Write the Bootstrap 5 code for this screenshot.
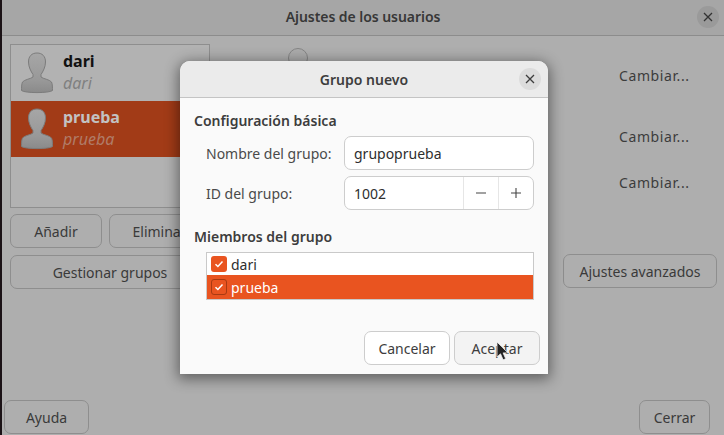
<!DOCTYPE html>
<html lang="es">
<head>
  <meta charset="UTF-8">
  <meta name="viewport" content="width=device-width, initial-scale=1.0">
  <title>Ajustes de los usuarios</title>
  <link rel="stylesheet" href="https://cdn.jsdelivr.net/npm/bootstrap@5.3.0/dist/css/bootstrap.min.css">
  <style>
    body { background: linear-gradient(to right, #1b1216 92%, #6a1f4e); width: 724px; height: 435px; overflow: hidden; position: relative; font-family: "Noto Sans", sans-serif; font-size: 14px; color: #3d3d3d; }
    .main-win { position: absolute; left: 2px; top: 0; width: 722px; height: 435px; background: #aeaeae; border-radius: 9px 9px 0 0; color: #373737; }
    .win-head { height: 36px; background: #a6a6a6; border-bottom: 1px solid #8c8c8c; font-weight: 600; letter-spacing: -.05px; padding-bottom: 2px; }
    .round-x { width: 22px; height: 22px; border-radius: 50%; border: 0; padding: 0; }
    .main-win .round-x { background: #9a9a9a; position: absolute; right: 5px; top: 6px; }
    .win-body { height: 399px; padding: 8px 7px 1px 2px; }
    .left-col { width: 200px; margin-left: 6px; }
    .user-box { height: 164px; border: 1px solid #8e8e8e; background: #b2b2b2; }
    .user-row { height: 56px; padding-left: 9px; gap: 5px; }
    .user-row.on { height: 56px; background: #a23b17; color: #c4c4c4; }
    .user-name { font-size: 16px; font-weight: 700; line-height: 20px; color: #111; }
    .user-row.on .user-name { color: #c2c2c2; }
    .user-sub { font-size: 16px; font-style: italic; line-height: 24px; color: #808080; }
    .user-row.on .user-sub { color: #b07c68; }
    .gtk-btn { height: 34px; padding: 0; font-size: 14px; color: #3a3a3a; background: transparent; border: 1px solid #8e8e8e; border-radius: 7px; }
    .btn-pair { margin-top: 6px; }
    .add-btn { width: 92px; }
    .del-btn { width: 101px; margin-left: 7px; white-space: nowrap; }
    .groups-btn { width: 200px; margin-top: 7px; }
    .right-col { width: 154px; }
    .change-link { padding-left: 56px; color: #3c3c3c; letter-spacing: .6px; line-height: 20px; }
    .change-one { margin-top: 22px; }
    .change-two { margin-top: 41px; }
    .change-three { margin-top: 26px; }
    .adv-btn { margin-top: 61px; }
    .radio-dot { width: 20px; height: 20px; border-radius: 50%; border: 1px solid #858585; background: #ababab; margin-left: 78px; margin-top: 4px; }
    .win-foot { position: absolute; left: 2px; right: 14px; bottom: 1px; }
    .foot-btn { width: 85px; }
    .close-btn { width: 71px; }
    .dlg { position: absolute; left: 180px; top: 61px; width: 368px; height: 313px; background: #fafafa; border-radius: 10px 10px 0 0; box-shadow: 0 3px 14px 2px rgba(0,0,0,.45); z-index: 5; }
    .dlg-head { height: 37px; background: #ebebeb; border-bottom: 1px solid #c4c4c4; border-radius: 10px 10px 0 0; font-weight: 600; color: #3d3d3d; }
    .dlg .round-x { background: #dcdcdc; position: absolute; right: 7px; top: 7px; }
    .dlg-body { padding: 14px 14px 0; }
    .sect-title { font-weight: 600; line-height: 18px; color: #3d3d3d; }
    .basic-title { margin-bottom: 6px; }
    .field-row { margin-left: 12px; height: 34px; }
    .field-first { margin-bottom: 6px; }
    .field-label { width: 138px; color: #4a4a4a; }
    .gtk-input { width: 190px; height: 34px; padding: 0 9px; font-size: 14px; color: #2e2e2e; background: #fff; border: 1px solid #cdcdcd; border-radius: 7px; }
    .gtk-input:focus { box-shadow: none; border-color: #cdcdcd; }
    .spin-box { width: 190px; height: 34px; background: #fff; border: 1px solid #cdcdcd; border-radius: 7px; overflow: hidden; }
    .spin-val { flex: 1; padding-left: 9px; color: #2e2e2e; }
    .spin-step { width: 35px; height: 100%; border-left: 1px solid #e6e6e6; }
    .members-title { margin-top: 18px; margin-bottom: 6px; }
    .member-box { margin-left: 12px; width: 328px; height: 48px; border: 1px solid #c9c9c9; background: #fff; }
    .member-row { height: 22px; padding-left: 4px; gap: 4px; color: #2e2e2e; }
    .member-row.on { height: 24px; background: #e95420; color: #fff; }
    .check-box { width: 16px; height: 16px; border-radius: 3px; background: #e95420; }
    .member-row.on .check-box { border: 1px solid #a83a12; }
    .dlg-foot { position: absolute; right: 8px; bottom: 9px; gap: 4px; }
    .dlg-btn { width: 86px; height: 34px; background: #fff; border: 1px solid #cdcdcd; border-radius: 7px; color: #3d3d3d; font-size: 14px; padding: 0; }
    .dlg-btn.hov { background: #f3f3f3; }
    .mouse-arrow { position: absolute; left: 496px; top: 341px; z-index: 9; }
  </style>
</head>
<body>
  <div class="main-win">
    <div class="win-head d-flex align-items-center justify-content-center">Ajustes de los usuarios</div>
    <button class="round-x d-flex align-items-center justify-content-center" aria-label="Cerrar">
      <svg width="10" height="10" viewBox="0 0 10 10"><path d="M1 1l8 8M9 1l-8 8" stroke="#333" stroke-width="1.3"/></svg>
    </button>
    <div class="win-body d-flex">
      <div class="left-col d-flex flex-column">
        <div class="user-box">
          <div class="user-row d-flex align-items-center">
            <svg width="34" height="42" viewBox="0 0 34 42"><defs><linearGradient id="pg" x1="0" y1="0" x2="0" y2="1"><stop offset="0" stop-color="#a6a6a6"/><stop offset=".7" stop-color="#989898"/><stop offset="1" stop-color="#8a8a8a"/></linearGradient></defs><path d="M17 1c-5.500 0-8.500 3.500-8.500 9 0 5 2.500 9.500 4.500 12.500v2.500c-2 1.800-8.500 2.500-10.500 5C1.500 32 1.500 36 1.500 38.500c3 2.800 28 2.800 31 0 0-2.500 0-6.500-1-8.500-2-2.500-8.500-3.200-10.500-5v-2.500c2-3 4.500-7.500 4.500-12.500 0-5.500-3-9-8.500-9z" fill="url(#pg)" stroke="#7c7c7c"/></svg>
            <div class="ps-1">
              <div class="user-name">dari</div>
              <div class="user-sub">dari</div>
            </div>
          </div>
          <div class="user-row on d-flex align-items-center">
            <svg width="34" height="42" viewBox="0 0 34 42"><path d="M17 1c-5.500 0-8.500 3.500-8.500 9 0 5 2.500 9.500 4.500 12.500v2.500c-2 1.800-8.500 2.500-10.500 5C1.500 32 1.500 36 1.500 38.500c3 2.800 28 2.800 31 0 0-2.500 0-6.500-1-8.500-2-2.500-8.500-3.200-10.500-5v-2.500c2-3 4.500-7.500 4.500-12.500 0-5.500-3-9-8.500-9z" fill="url(#pg)" stroke="#7c7c7c"/></svg>
            <div class="ps-1">
              <div class="user-name">prueba</div>
              <div class="user-sub">prueba</div>
            </div>
          </div>
        </div>
        <div class="btn-pair d-flex">
          <button class="gtk-btn add-btn">Añadir</button>
          <button class="gtk-btn del-btn">Eliminar</button>
        </div>
        <button class="gtk-btn groups-btn">Gestionar grupos</button>
      </div>
      <div class="radio-dot flex-shrink-0"></div>
      <div class="right-col d-flex flex-column ms-auto">
        <div class="change-link change-one">Cambiar...</div>
        <div class="change-link change-two">Cambiar...</div>
        <div class="change-link change-three">Cambiar...</div>
        <button class="gtk-btn w-100 adv-btn">Ajustes avanzados</button>
      </div>
    </div>
    <div class="win-foot d-flex justify-content-between">
      <button class="gtk-btn foot-btn">Ayuda</button>
      <button class="gtk-btn close-btn">Cerrar</button>
    </div>
  </div>

  <div class="dlg">
    <div class="dlg-head d-flex align-items-center justify-content-center">Grupo nuevo</div>
    <button class="round-x d-flex align-items-center justify-content-center" aria-label="Cerrar">
      <svg width="10" height="10" viewBox="0 0 10 10"><path d="M1 1l8 8M9 1l-8 8" stroke="#3d3d3d" stroke-width="1.3"/></svg>
    </button>
    <div class="dlg-body">
      <div class="sect-title basic-title">Configuración básica</div>
      <div class="field-row field-first d-flex align-items-center">
        <div class="field-label">Nombre del grupo:</div>
        <input class="form-control gtk-input" value="grupoprueba">
      </div>
      <div class="field-row d-flex align-items-center">
        <div class="field-label">ID del grupo:</div>
        <div class="spin-box d-flex align-items-center">
          <div class="spin-val">1002</div>
          <div class="spin-step d-flex align-items-center justify-content-center"><svg width="12" height="12" viewBox="0 0 12 12"><path d="M1 6h10" stroke="#444" stroke-width="1.1"/></svg></div>
          <div class="spin-step d-flex align-items-center justify-content-center"><svg width="12" height="12" viewBox="0 0 12 12"><path d="M1 6h10M6 1v10" stroke="#444" stroke-width="1.1"/></svg></div>
        </div>
      </div>
      <div class="sect-title members-title">Miembros del grupo</div>
      <div class="member-box">
        <div class="member-row d-flex align-items-center">
          <span class="check-box d-flex align-items-center justify-content-center"><svg width="10" height="10" viewBox="0 0 10 10"><path d="M1.5 5.2l2.4 2.3 4.6-5" fill="none" stroke="#fff" stroke-width="1.5"/></svg></span>
          dari
        </div>
        <div class="member-row on d-flex align-items-center">
          <span class="check-box d-flex align-items-center justify-content-center"><svg width="10" height="10" viewBox="0 0 10 10"><path d="M1.5 5.2l2.4 2.3 4.6-5" fill="none" stroke="#fff" stroke-width="1.5"/></svg></span>
          prueba
        </div>
      </div>
    </div>
    <div class="dlg-foot d-flex">
      <button class="dlg-btn">Cancelar</button>
      <button class="dlg-btn hov">Aceptar</button>
    </div>
  </div>

  <svg class="mouse-arrow" width="14" height="22" viewBox="0 0 14 22"><path d="M1 1v15l3.500-3.200 2.600 6 2.600-1.100-2.600-5.800H12z" fill="#222" stroke="#eee" stroke-width=".8"/></svg>
  <script src="https://cdn.jsdelivr.net/npm/bootstrap@5.3.0/dist/js/bootstrap.bundle.min.js"></script>
</body>
</html>
